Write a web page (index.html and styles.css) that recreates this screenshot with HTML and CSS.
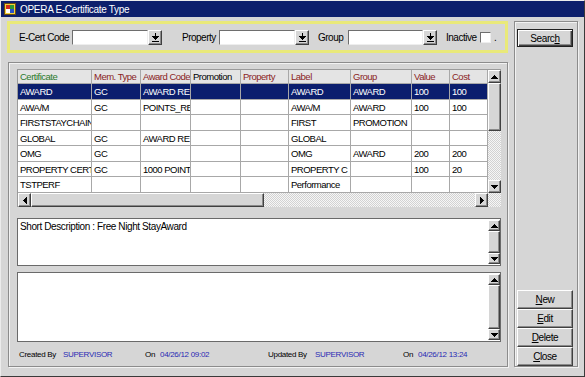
FILE: index.html
```html
<!DOCTYPE html>
<html lang="en">
<head>
    <meta charset="UTF-8">
    <title>OPERA E-Certificate Type</title>
    <link rel="stylesheet" href="styles.css">
</head>
<body>

    <div class="window">
        <!-- Title bar -->
        <div class="titlebar">
            <svg class="app-icon" width="12" height="12" viewBox="0 0 12 12">
                <rect x="0.5" y="0.5" width="11" height="11" fill="#f2d23a" stroke="#6a4a10"/>
                <rect x="2" y="2" width="4" height="4" fill="#d22a1e"/>
                <rect x="6" y="2" width="4" height="4" fill="#2f9a35"/>
                <rect x="2" y="6" width="4" height="4" fill="#fff"/>
                <rect x="6" y="6" width="4" height="4" fill="#2a52c8"/>
            </svg>
            <span>OPERA E-Certificate Type</span>
        </div>

        <div class="content">
            <div class="main-col">
                <!-- Filter -->
                <div class="filter">
                    <span class="f-label lbl-code">E-Cert Code</span>
                    <span class="field w76"></span>
                    <span class="drop">
                        <svg width="7" height="9" viewBox="0 0 7 9"><path d="M3 0h1v3h3v1H6v1H5v1H4v1H3V6H2V5H1V4H0V3h3z"/><rect x="0" y="8" width="7" height="1"/></svg>
                    </span>

                    <span class="f-label lbl-prop">Property</span>
                    <span class="field w76"></span>
                    <span class="drop">
                        <svg width="7" height="9" viewBox="0 0 7 9"><path d="M3 0h1v3h3v1H6v1H5v1H4v1H3V6H2V5H1V4H0V3h3z"/><rect x="0" y="8" width="7" height="1"/></svg>
                    </span>

                    <span class="f-label lbl-group">Group</span>
                    <span class="field w75"></span>
                    <span class="drop">
                        <svg width="7" height="9" viewBox="0 0 7 9"><path d="M3 0h1v3h3v1H6v1H5v1H4v1H3V6H2V5H1V4H0V3h3z"/><rect x="0" y="8" width="7" height="1"/></svg>
                    </span>

                    <span class="f-label lbl-inactive">Inactive</span>
                    <span class="check"></span>
                    <span class="dot">.</span>
                </div>

                <!-- Main panel -->
                <div class="panel">
                    <div class="grid">
                        <div class="grid-body">
                            <div class="row head">
                                <div class="cell c-green">Certificate</div>
                                <div class="cell c-red">Mem. Type</div>
                                <div class="cell c-red">Award Code</div>
                                <div class="cell">Promotion</div>
                                <div class="cell c-red">Property</div>
                                <div class="cell c-red">Label</div>
                                <div class="cell c-red">Group</div>
                                <div class="cell c-red">Value</div>
                                <div class="cell c-red">Cost</div>
                            </div>
                            <div class="row selected">
                                <div class="cell">AWARD</div>
                                <div class="cell">GC</div>
                                <div class="cell">AWARD RE</div>
                                <div class="cell"></div>
                                <div class="cell"></div>
                                <div class="cell">AWARD</div>
                                <div class="cell">AWARD</div>
                                <div class="cell">100</div>
                                <div class="cell">100</div>
                            </div>
                            <div class="row">
                                <div class="cell">AWA/M</div>
                                <div class="cell">GC</div>
                                <div class="cell">POINTS_RE</div>
                                <div class="cell"></div>
                                <div class="cell"></div>
                                <div class="cell">AWA/M</div>
                                <div class="cell">AWARD</div>
                                <div class="cell">100</div>
                                <div class="cell">100</div>
                            </div>
                            <div class="row">
                                <div class="cell">FIRSTSTAYCHAIN</div>
                                <div class="cell"></div>
                                <div class="cell"></div>
                                <div class="cell"></div>
                                <div class="cell"></div>
                                <div class="cell">FIRST</div>
                                <div class="cell">PROMOTION</div>
                                <div class="cell"></div>
                                <div class="cell"></div>
                            </div>
                            <div class="row">
                                <div class="cell">GLOBAL</div>
                                <div class="cell">GC</div>
                                <div class="cell">AWARD RE</div>
                                <div class="cell"></div>
                                <div class="cell"></div>
                                <div class="cell">GLOBAL</div>
                                <div class="cell"></div>
                                <div class="cell"></div>
                                <div class="cell"></div>
                            </div>
                            <div class="row">
                                <div class="cell">OMG</div>
                                <div class="cell">GC</div>
                                <div class="cell"></div>
                                <div class="cell"></div>
                                <div class="cell"></div>
                                <div class="cell">OMG</div>
                                <div class="cell">AWARD</div>
                                <div class="cell">200</div>
                                <div class="cell">200</div>
                            </div>
                            <div class="row">
                                <div class="cell">PROPERTY CERT</div>
                                <div class="cell">GC</div>
                                <div class="cell">1000 POINT</div>
                                <div class="cell"></div>
                                <div class="cell"></div>
                                <div class="cell">PROPERTY C</div>
                                <div class="cell"></div>
                                <div class="cell">100</div>
                                <div class="cell">20</div>
                            </div>
                            <div class="row">
                                <div class="cell">TSTPERF</div>
                                <div class="cell"></div>
                                <div class="cell"></div>
                                <div class="cell"></div>
                                <div class="cell"></div>
                                <div class="cell">Performance</div>
                                <div class="cell"></div>
                                <div class="cell"></div>
                                <div class="cell"></div>
                            </div>
                        </div>

                        <!-- vertical scrollbar -->
                        <div class="vscroll">
                            <span class="sb-btn"><svg width="7" height="4"><path d="M3 0h1v1h1v1h1v1h1v1H0V3h1V2h1V1h1z"/></svg></span>
                            <span class="v-thumb"></span>
                            <span class="sb-track"></span>
                            <span class="sb-btn"><svg width="7" height="4"><path d="M0 0h7v1H6v1H5v1H4v1H3V3H2V2H1V1H0z"/></svg></span>
                        </div>

                        <!-- horizontal scrollbar -->
                        <div class="hscroll">
                            <span class="sb-btn"><svg width="4" height="7"><path d="M4 0v7H3V6H2V5H1V4H0V3h1V2h1V1h1V0z"/></svg></span>
                            <span class="h-thumb"></span>
                            <span class="sb-track"></span>
                            <span class="sb-btn"><svg width="4" height="7"><path d="M0 0h1v1h1v1h1v1h1v1H3v1H2v1H1v1H0z"/></svg></span>
                        </div>
                        <div class="corner"></div>
                    </div>

                    <!-- Short description -->
                    <div class="memo desc">
                        <div class="memo-text">Short Description : Free Night StayAward</div>
                        <div class="memo-scroll">
                            <span class="sb-btn"><svg width="7" height="4"><path d="M3 0h1v1h1v1h1v1h1v1H0V3h1V2h1V1h1z"/></svg></span>
                            <span class="m-thumb"></span>
                            <span class="sb-btn"><svg width="7" height="4"><path d="M0 0h7v1H6v1H5v1H4v1H3V3H2V2H1V1H0z"/></svg></span>
                        </div>
                    </div>

                    <!-- Long description -->
                    <div class="memo notes">
                        <div class="memo-text"></div>
                        <div class="memo-scroll">
                            <span class="sb-btn"><svg width="7" height="4"><path d="M3 0h1v1h1v1h1v1h1v1H0V3h1V2h1V1h1z"/></svg></span>
                            <span class="m-thumb"></span>
                            <span class="sb-btn"><svg width="7" height="4"><path d="M0 0h7v1H6v1H5v1H4v1H3V3H2V2H1V1H0z"/></svg></span>
                        </div>
                    </div>

                    <!-- Audit info -->
                    <div class="footer">
                        <span>Created By</span>
                        <span class="val">SUPERVISOR</span>
                        <span>On</span>
                        <span class="val">04/26/12 09:02</span>
                        <span>Updated By</span>
                        <span class="val">SUPERVISOR</span>
                        <span>On</span>
                        <span class="val">04/26/12 13:24</span>
                    </div>
                </div>
            </div>

            <!-- Side buttons -->
            <div class="side">
                <button class="btn default">Searc<u>h</u></button>
                <div class="actions">
                    <button class="btn"><u>N</u>ew</button>
                    <button class="btn"><u>E</u>dit</button>
                    <button class="btn"><u>D</u>elete</button>
                    <button class="btn"><u>C</u>lose</button>
                </div>
            </div>
        </div>
    </div>

</body>
</html>
```

FILE: styles.css
```css
/* Reset */
* {
    margin: 0;
    padding: 0;
    box-sizing: border-box;
}

body {
    font-family: "Liberation Sans", Arial, sans-serif;
    font-size: 10px;
    letter-spacing: -0.4px;
    color: #000;
    background: #d6d6d6;
}

/* Window frame */
.window {
    width: 585px;
    height: 377px;
    background: #d6d6d6;
    border: 1px solid;
    border-color: #ececec #3a3a3a #3a3a3a #ececec;
    display: flex;
    flex-direction: column;
}

.titlebar {
    height: 16px;
    background: #0d1f6c;
    color: #fff;
    display: flex;
    align-items: center;
    gap: 4px;
    padding-left: 3px;
    font-size: 10px;
    letter-spacing: -0.3px;
}

.content {
    flex: 1;
    display: flex;
    gap: 6px;
    padding: 4px 6px 9px 6px;
}

.main-col {
    width: 501px;
    display: flex;
    flex-direction: column;
    gap: 9px;
}

/* Filter bar */
.filter {
    height: 32px;
    border: 3px solid #e9e97a;
    display: flex;
    align-items: center;
    padding-left: 9px;
    white-space: nowrap;
    letter-spacing: -0.5px;
}

.f-label {
    display: inline-block;
}

.lbl-code { width: 53px; }
.lbl-prop { width: 37px; margin-left: 20px; }
.lbl-group { width: 30px; margin-left: 9px; }
.lbl-inactive { width: 34px; margin-left: 9px; }

.field {
    height: 15px;
    background: #fff;
    border: 1px solid;
    border-color: #6e6e6e #eeeeee #eeeeee #6e6e6e;
}

.w76 { width: 76px; }
.w75 { width: 75px; }

.drop {
    width: 14px;
    height: 15px;
    background: #d6d6d6;
    border: 1px solid;
    border-color: #fff #404040 #404040 #fff;
    box-shadow: inset -1px -1px 0 #8a8a8a;
    display: flex;
    align-items: center;
    justify-content: center;
}

.check {
    width: 11px;
    height: 11px;
    background: #fff;
    border: 1px solid;
    border-color: #6e6e6e #eeeeee #eeeeee #6e6e6e;
}

.dot {
    margin-left: 3px;
}

/* Main panel */
.panel {
    flex: 1;
    margin-left: 1px;
    border: 1px solid #8c8c8c;
    box-shadow: inset 1px 1px 0 #f2f2f2, 1px 1px 0 #f2f2f2;
    padding: 6px 6px 0 8px;
    display: flex;
    flex-direction: column;
}

/* Certificate grid */
.grid {
    width: 484px;
    display: grid;
    grid-template-columns: 470px 13px;
    grid-template-rows: 123px 14px;
    border-top: 1px solid #9a9a9a;
    border-left: 1px solid #9a9a9a;
}

.grid-body {
    overflow: hidden;
    background: #fff;
    font-size: 9.5px;
    letter-spacing: -0.5px;
}

.row {
    display: grid;
    grid-template-columns: 74px 49px 50px 50px 48px 62px 61px 38px 38px;
    height: 16px;
}

.row:nth-child(odd) {
    height: 15px;
}

.row.head {
    height: 14px;
    background: #e4e4e4;
}

.cell {
    border-right: 1px solid #a8a8a8;
    border-bottom: 1px solid #a8a8a8;
    padding-left: 2px;
    overflow: hidden;
    white-space: nowrap;
    display: flex;
    align-items: center;
}

.c-green { color: #2b7a2b; }
.c-red { color: #8a1e1e; }

.row.selected {
    background: #0b1e6e;
    color: #fff;
}

/* Scrollbars */
.sb-btn {
    width: 13px;
    height: 13px;
    background: #d6d6d6;
    border: 1px solid;
    border-color: #fff #404040 #404040 #fff;
    box-shadow: inset -1px -1px 0 #8a8a8a;
    display: flex;
    align-items: center;
    justify-content: center;
    flex-shrink: 0;
}

.sb-track {
    flex: 1;
    background: repeating-conic-gradient(#d2d2d2 0 25%, #f6f6f6 0 50%) 0 0 / 2px 2px;
}

.vscroll {
    display: flex;
    flex-direction: column;
    background: #d6d6d6;
}

.v-thumb,
.h-thumb,
.m-thumb {
    background: #d6d6d6;
    border: 1px solid;
    border-color: #fff #404040 #404040 #fff;
    box-shadow: inset -1px -1px 0 #8a8a8a;
    flex-shrink: 0;
}

.v-thumb { height: 48px; }
.h-thumb { width: 233px; }

.hscroll {
    display: flex;
}

.hscroll .sb-btn {
    height: 14px;
}

.corner {
    background: repeating-conic-gradient(#d2d2d2 0 25%, #f6f6f6 0 50%) 0 0 / 2px 2px;
}

/* Memo boxes */
.memo {
    width: 484px;
    background: #fff;
    border: 1px solid #6a6a6a;
    display: flex;
}

.desc {
    height: 48px;
    margin-top: 11px;
}

.notes {
    height: 70px;
    margin-top: 6px;
}

.memo-text {
    flex: 1;
    padding: 2px 2px;
}

.memo-scroll {
    width: 12px;
    margin: 1px 0;
    display: flex;
    flex-direction: column;
}

.memo-scroll .sb-btn {
    width: 12px;
    height: 11px;
}

.m-thumb {
    flex: 1;
}

/* Audit footer */
.footer {
    flex: 1;
    display: grid;
    grid-template-columns: 44px 82px 15px 108px 47px 88px 15px 1fr;
    align-items: center;
    padding-left: 2px;
    white-space: nowrap;
    font-size: 8px;
    letter-spacing: -0.3px;
}

.footer .val {
    color: #2a2ab4;
    padding-top: 1px;
}

/* Side button column */
.side {
    width: 64px;
    border: 1px solid #8c8c8c;
    box-shadow: inset 1px 1px 0 #f2f2f2, 1px 1px 0 #f2f2f2;
    padding: 7px 4px 0 2px;
    display: flex;
    flex-direction: column;
    justify-content: space-between;
}

.actions {
    display: flex;
    flex-direction: column;
}

.btn {
    width: 56px;
    height: 19px;
    background: #d6d6d6;
    border: 1px solid;
    border-color: #fff #404040 #404040 #fff;
    box-shadow: inset -1px -1px 0 #8a8a8a;
    font: inherit;
    letter-spacing: inherit;
    color: #000;
    cursor: pointer;
}

.btn.default {
    height: 18px;
    border: 1px solid #202020;
    box-shadow: inset 1px 1px 0 #fff, inset -1px -1px 0 #404040, inset -2px -2px 0 #8a8a8a;
}
```
